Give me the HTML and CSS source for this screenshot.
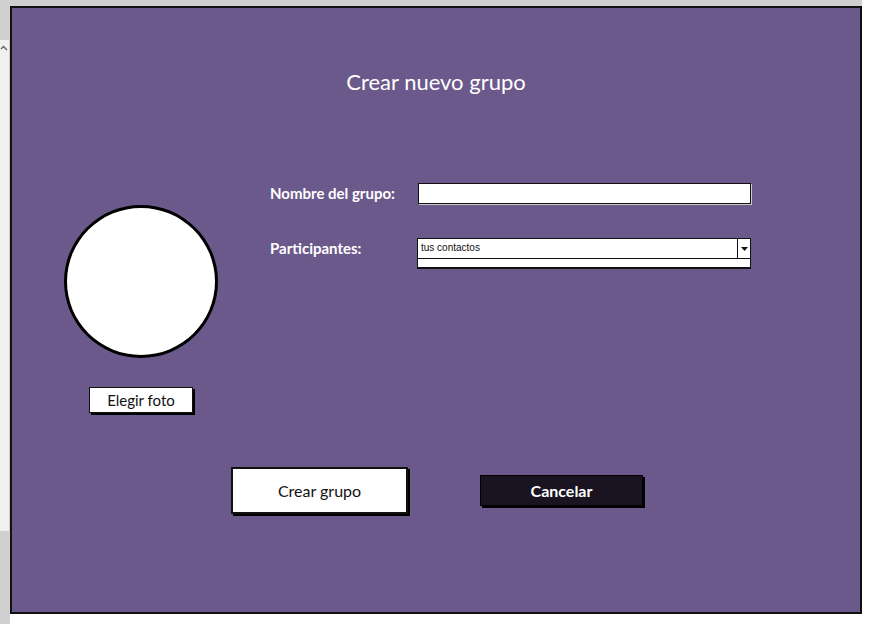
FILE: index.html
```html
<!DOCTYPE html>
<html lang="es">
<head>
<meta charset="utf-8">
<title>Crear nuevo grupo</title>
<link rel="stylesheet" href="styles.css">
</head>
<body>
<div class="topstrip"></div>
<div class="page">
  <div class="side">
    <div class="side-light">
      <svg class="caret" width="8" height="8" viewBox="0 0 8 8"><path d="M1 4 L3.5 1.5 L6 4 M3.5 1.5 L3.5 2.5 M5 3 L7 5" stroke="#666" stroke-width="1.4" fill="none"/></svg>
    </div>
  </div>
  <div class="frame">
    <h1 class="title">Crear nuevo grupo</h1>
    <div class="content">
      <div class="photo-col">
        <div class="avatar"></div>
        <button class="btn btn-small">Elegir foto</button>
      </div>
      <div class="form">
        <div class="row">
          <label class="label">Nombre del grupo:</label>
          <div class="input"></div>
        </div>
        <div class="row row-select">
          <label class="label">Participantes:</label>
          <div class="select-wrap">
            <div class="select">
              <span class="select-text">tus contactos</span>
              <span class="select-arrow"><svg width="7" height="4" viewBox="0 0 7 4"><path d="M0 0 L7 0 L3.5 4 Z" fill="#111"/></svg></span>
            </div>
            <div class="list"></div>
          </div>
        </div>
      </div>
    </div>
    <div class="actions">
      <button class="btn btn-create">Crear grupo</button>
      <button class="btn btn-cancel">Cancelar</button>
    </div>
  </div>
</div>
</body>
</html>
```

FILE: styles.css
```css
* { box-sizing: border-box; }
html, body { margin: 0; padding: 0; }
body {
  background: #ffffff;
  width: 876px;
  height: 624px;
  overflow: hidden;
  font-family: Lato, "Noto Sans", sans-serif;
}
.topstrip {
  width: 862px;
  height: 6px;
  background: #d0d0d0;
}
.page {
  display: flex;
  align-items: flex-start;
}
.side {
  width: 10px;
  height: 618px;
  background: #d0d0d0;
  padding-top: 34px;
}
.side-light {
  width: 9px;
  height: 491px;
  background: #f0f0f0;
  padding-top: 5px;
}
.caret { display: block; }
.frame {
  width: 852px;
  height: 608px;
  border: 2px solid #111111;
  background: #6b598b;
  display: flex;
  flex-direction: column;
}
.title {
  margin: 62px 0 0 0;
  height: 24px;
  line-height: 24px;
  font-size: 22px;
  font-weight: 400;
  color: #ffffff;
  text-align: center;
  padding-left: 0;
}
.content {
  display: flex;
  margin-top: 89px;
  padding-left: 52px;
}
.photo-col {
  display: flex;
  flex-direction: column;
  align-items: center;
  padding-top: 22px;
  width: 154px;
}
.avatar {
  width: 154px;
  height: 153px;
  border-radius: 50%;
  background: #ffffff;
  border: 3px solid #000000;
}
.btn {
  font-family: Lato, "Noto Sans", sans-serif;
  font-size: 15.5px;
  border: 2px solid #111;
  background: #ffffff;
  color: #111;
  box-shadow: 2px 2px 0 #000;
  padding: 0;
  cursor: pointer;
}
.btn-small {
  margin-top: 29px;
  width: 104px;
  height: 26px;
  border-width: 1.5px;
  font-size: 15px;
}
.form {
  margin-left: 52px;
  display: flex;
  flex-direction: column;
}
.row {
  display: flex;
  align-items: center;
  height: 21px;
}
.row-select {
  margin-top: 34px;
  align-items: flex-start;
}
.label {
  width: 148px;
  color: #ffffff;
  font-weight: 700;
  font-size: 15px;
  line-height: 21px;
}
.input {
  width: 333px;
  height: 21px;
  background: #ffffff;
  border: 1.5px solid #111;
  box-shadow: 1px 1px 0 #ccc;
}
.select-wrap {
  margin-left: -1px;
  width: 334px;
}
.select {
  display: flex;
  height: 21px;
  background: #ffffff;
  border: 1.5px solid #111;
}
.select-text {
  flex: 1;
  font-size: 10px;
  line-height: 17px;
  padding-left: 3px;
  color: #111;
  font-family: "Liberation Sans", Arial, sans-serif;
}
.select-arrow {
  width: 13px;
  border-left: 1.5px solid #111;
  display: flex;
  align-items: center;
  justify-content: center;
}
.list {
  height: 10px;
  background: #ffffff;
  border: 1.5px solid #111;
  border-top: 0;
  border-bottom-width: 2.5px;
  padding: 2px 1px 0;
}
.actions {
  display: flex;
  align-items: center;
  gap: 72px;
  margin-top: 54px;
  padding-left: 219px;
}
.btn-create {
  width: 177px;
  height: 47px;
  font-size: 16px;
}
.btn-cancel {
  width: 163px;
  height: 31px;
  background: #1a1320;
  color: #ffffff;
  font-weight: 700;
  font-size: 16px;
  border: 1px solid #000;
}
```
